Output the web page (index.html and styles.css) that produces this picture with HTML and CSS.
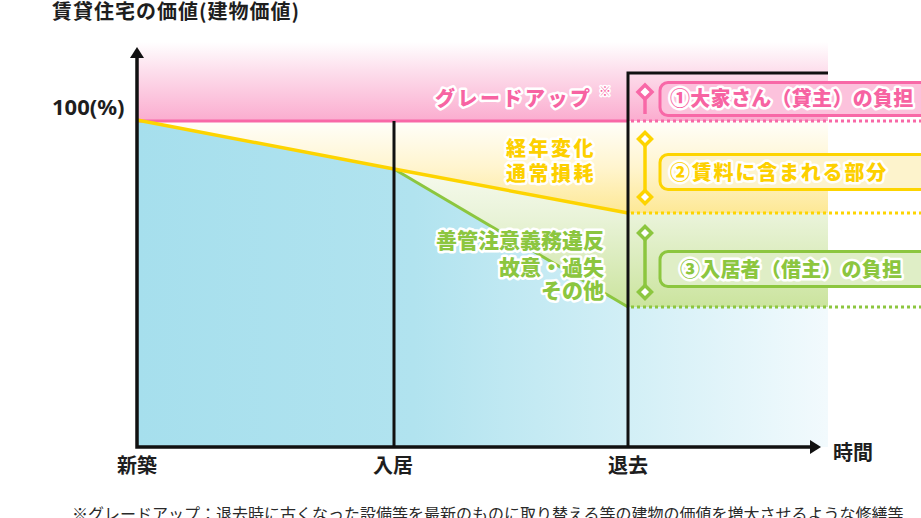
FILE: index.html
```html
<!DOCTYPE html>
<html lang="ja">
<head>
<meta charset="utf-8">
<title>賃貸住宅の価値</title>
<link rel="stylesheet" href="styles.css">
</head>
<body>
<div class="page">
  <h1 class="title">賃貸住宅の価値(建物価値)</h1>
  <svg class="chart" width="921" height="481" viewBox="0 22 921 481" xmlns="http://www.w3.org/2000/svg">
    <defs>
      <linearGradient id="gPink" gradientUnits="userSpaceOnUse" x1="0" y1="42" x2="0" y2="121">
        <stop offset="0" stop-color="#ffffff"/>
        <stop offset="0.35" stop-color="#fde0ed"/>
        <stop offset="1" stop-color="#fbaccf"/>
      </linearGradient>
      <linearGradient id="gYellow" gradientUnits="userSpaceOnUse" x1="0" y1="121" x2="0" y2="213">
        <stop offset="0" stop-color="#fffefa"/>
        <stop offset="0.5" stop-color="#fff5cf"/>
        <stop offset="1" stop-color="#fde895"/>
      </linearGradient>
      <linearGradient id="gGreen" gradientUnits="userSpaceOnUse" x1="0" y1="170" x2="0" y2="307">
        <stop offset="0" stop-color="#f6faee"/>
        <stop offset="0.35" stop-color="#e9f3d8"/>
        <stop offset="1" stop-color="#cbe49e"/>
      </linearGradient>
      <linearGradient id="gBlue" gradientUnits="userSpaceOnUse" x1="137" y1="0" x2="828" y2="0">
        <stop offset="0" stop-color="#a6dfed"/>
        <stop offset="0.4" stop-color="#b1e3ef"/>
        <stop offset="0.71" stop-color="#d2eff6"/>
        <stop offset="1" stop-color="#f2fafd"/>
      </linearGradient>
    </defs>

    <!-- background bands -->
    <rect x="137" y="40" width="691" height="81" fill="url(#gPink)"/>
    <rect x="137" y="121" width="691" height="92" fill="url(#gYellow)"/>
    <polygon points="394,169 628,213 828,213 828,307 628,307" fill="url(#gGreen)"/>
    <polygon points="137,120 394,169 628,307 828,307 828,447 137,447" fill="url(#gBlue)"/>

    <!-- value lines -->
    <line x1="137" y1="121" x2="628" y2="121" class="ln-pink"/>
    <line x1="394" y1="169" x2="628" y2="307" class="ln-green"/>
    <polyline points="137,120 394,169 628,213" class="ln-yellow"/>

    <!-- dotted guides -->
    <line x1="631" y1="121" x2="921" y2="121" class="dot dot-pink"/>
    <line x1="631" y1="213" x2="921" y2="213" class="dot dot-yellow"/>
    <line x1="631" y1="307" x2="921" y2="307" class="dot dot-green"/>

    <!-- black frame lines -->
    <path d="M394 121 V447 M628 447 V73 H828" class="frame"/>
    <path d="M137 55 V447 H812" class="axis"/>
    <polygon points="137,47 130,58 144,58" class="arrow"/>
    <polygon points="821,447 810,440 810,454" class="arrow"/>

    <!-- markers -->
    <path d="M645 85 L652 92 L645 99 L638 92 Z" class="mk mk-pink"/>
    <line x1="645" y1="99" x2="645" y2="114" class="mk-stem mk-pink"/>

    <line x1="645" y1="146" x2="645" y2="190" class="mk-stem mk-yellow"/>
    <path d="M645 132.5 L651.5 139 L645 145.5 L638.5 139 Z" class="mk mk-yellow"/>
    <path d="M645 190.5 L651.5 197 L645 203.5 L638.5 197 Z" class="mk mk-yellow"/>

    <line x1="645" y1="240" x2="645" y2="285" class="mk-stem mk-green"/>
    <path d="M645 226.5 L651.5 233 L645 239.5 L638.5 233 Z" class="mk mk-green"/>
    <path d="M645 285.5 L651.5 292 L645 298.5 L638.5 292 Z" class="mk mk-green"/>

    <!-- boxes -->
    <rect x="660" y="82.5" width="300" height="33" rx="8" class="box box-pink"/>
    <rect x="660" y="154.5" width="300" height="35" rx="8" class="box box-yellow"/>
    <rect x="660" y="251.5" width="300" height="35" rx="8" class="box box-green"/>

    <!-- box labels -->
    <text x="670" y="106" class="lbl t-pink box-t1">①大家さん（貸主）の負担</text>
    <text x="670" y="180" class="lbl t-yellow box-t2">②賃料に含まれる部分</text>
    <text x="680" y="277" class="lbl t-green box-t3">③入居者（借主）の負担</text>

    <!-- chart labels -->
    <text x="435" y="106" class="lbl t-pink grade">グレードアップ</text>
    <text x="599" y="96" class="lbl t-pink sup">※</text>

    <text x="506" y="156" class="lbl t-yellow wear">経年変化</text>
    <text x="506" y="181" class="lbl t-yellow wear">通常損耗</text>

    <text x="604" y="248" class="lbl t-green dmg">善管注意義務違反</text>
    <text x="604" y="275" class="lbl t-green dmg">故意・過失</text>
    <text x="604" y="298" class="lbl t-green dmg">その他</text>

    <text x="52" y="115" class="pct">100(%)</text>
    <text x="137" y="473" class="axis-t mid">新築</text>
    <text x="393" y="473" class="axis-t mid">入居</text>
    <text x="628" y="473" class="axis-t mid">退去</text>
    <text x="833" y="460" class="axis-t">時間</text>
  </svg>
  <p class="note">※グレードアップ：退去時に古くなった設備等を最新のものに取り替える等の建物の価値を増大させるような修繕等</p>
</div>
</body>
</html>
```

FILE: styles.css
```css
html, body {
  margin: 0;
  padding: 0;
  background: #ffffff;
}

body {
  font-family: "Noto Sans CJK JP", "Noto Sans", sans-serif;
  color: #1e1e1e;
}

.page {
  width: 921px;
  height: 518px;
  overflow: hidden;
  display: flex;
  flex-direction: column;
}

.title {
  margin: 0;
  padding-left: 52px;
  font-size: 20px;
  line-height: 22px;
  font-weight: 700;
  letter-spacing: 1px;
  color: #1e1e1e;
}

.chart {
  display: block;
  flex: none;
}

.note {
  margin: 0;
  padding-left: 72px;
  font-size: 16px;
  line-height: 20px;
  white-space: nowrap;
  color: #2a2a2a;
}

/* lines */
.ln-pink { stroke: #f868a7; stroke-width: 3; }
.ln-yellow { stroke: #fdd400; stroke-width: 3.5; fill: none; stroke-linejoin: round; }
.ln-green { stroke: #8cc63f; stroke-width: 3; }

.dot { stroke-width: 3; stroke-dasharray: 3 3; }
.dot-pink { stroke: #f868a7; }
.dot-yellow { stroke: #fdd400; }
.dot-green { stroke: #8cc63f; }

.frame { stroke: #111111; stroke-width: 3; fill: none; }
.axis { stroke: #111111; stroke-width: 3.5; fill: none; }
.arrow { fill: #111111; }

/* markers */
.mk { fill: #ffffff; stroke-width: 3.5; stroke-linejoin: miter; }
.mk-stem { stroke-width: 3.5; }
.mk-pink { stroke: #f868a7; }
.mk-yellow { stroke: #fdd400; }
.mk-green { stroke: #8cc63f; }

/* boxes */
.box { stroke-width: 3; }
.box-pink { fill: #fcc2dc; stroke: #f868a7; }
.box-yellow { fill: #fdf3cc; stroke: #fdd400; }
.box-green { fill: #dfeec6; stroke: #8cc63f; }

/* outlined labels */
.lbl {
  font-family: "Noto Sans CJK JP", sans-serif;
  font-weight: 900;
  font-size: 20px;
  paint-order: stroke;
  stroke: #ffffff;
  stroke-width: 5px;
  stroke-linejoin: round;
}
.t-pink { fill: #f763a2; }
.t-yellow { fill: #fdd000; }
.t-green { fill: #8cc63f; }

.box-t1 { letter-spacing: 0.3px; }
.box-t2 { letter-spacing: 1.8px; }
.box-t3 { letter-spacing: 0.2px; }

.grade { letter-spacing: 2.5px; }
.sup { font-size: 12px; font-weight: 700; stroke-width: 3px; }
.wear { letter-spacing: 2.5px; }
.dmg { font-size: 21px; text-anchor: end; }

.pct {
  font-family: "Noto Sans", sans-serif;
  font-weight: 700;
  font-size: 22px;
  fill: #1e1e1e;
}

.axis-t {
  font-family: "Noto Sans CJK JP", sans-serif;
  font-weight: 700;
  font-size: 20px;
  fill: #1e1e1e;
}
.mid { text-anchor: middle; }
```
